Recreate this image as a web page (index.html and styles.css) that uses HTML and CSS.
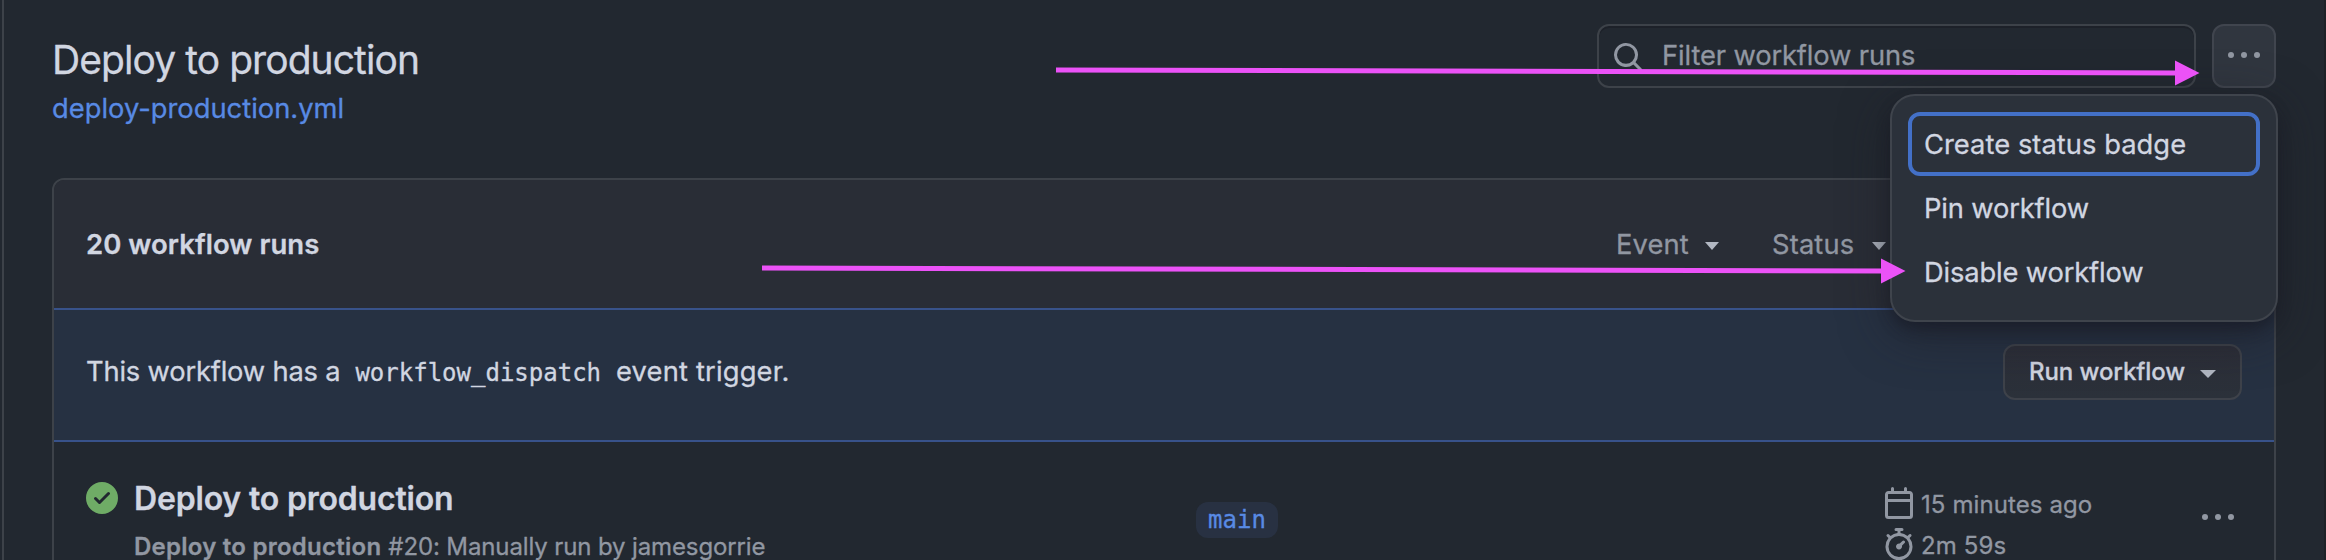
FILE: index.html
```
<!DOCTYPE html>
<html lang="en">
<head>
<meta charset="utf-8">
<title>Workflow runs</title>
<link rel="stylesheet" href="styles.css">
</head>
<body>
<main class="page">
  <header class="page-header">
    <div class="heading">
      <h1 class="title">Deploy to production</h1>
      <a class="file-link">deploy-production.yml</a>
    </div>
    <div class="tools">
      <div class="search">
        <svg class="icon" viewBox="0 0 16 16"><path d="M10.68 11.74a6 6 0 0 1-7.922-8.982 6 6 0 0 1 8.982 7.922l3.04 3.04a.749.749 0 0 1-.326 1.275.749.749 0 0 1-.734-.215ZM11.5 7a4.499 4.499 0 1 0-8.997 0A4.499 4.499 0 0 0 11.5 7Z"/></svg>
        <span class="placeholder">Filter workflow runs</span>
      </div>
      <div class="menu-anchor">
        <button class="more-button"><svg class="dots" viewBox="0 0 32 6"><circle cx="3" cy="3" r="3"/><circle cx="16" cy="3" r="3"/><circle cx="29" cy="3" r="3"/></svg></button>
        <div class="menu">
          <div class="menu-item focused">Create status badge</div>
          <div class="menu-item tight">Pin workflow</div>
          <div class="menu-item tight">Disable workflow</div>
        </div>
      </div>
    </div>
  </header>

  <section class="runs">
    <div class="runs-header">
      <strong class="count">20 workflow runs</strong>
      <div class="filters">
        <div class="filter event">Event<svg class="caret" viewBox="0 0 14 8"><path d="M0 0H14L7 8Z"/></svg></div>
        <div class="filter status">Status<svg class="caret" viewBox="0 0 14 8"><path d="M0 0H14L7 8Z"/></svg></div>
      </div>
    </div>
    <div class="banner">
      <p class="banner-text"><span class="lead">This workflow has a</span><code class="code">workflow_dispatch</code><span class="tail">event trigger.</span></p>
      <button class="run-button">Run workflow<svg class="caret wide" viewBox="0 0 16 8"><path d="M0 0H16L8 8Z"/></svg></button>
    </div>
    <div class="run">
      <div class="run-info">
        <svg class="icon success" viewBox="0 0 16 16"><path d="M8 16A8 8 0 1 1 8 0a8 8 0 0 1 0 16Zm3.78-9.72a.751.751 0 0 0-.018-1.042.751.751 0 0 0-1.042-.018L6.75 9.19 5.28 7.72a.751.751 0 0 0-1.042.018.751.751 0 0 0-.018 1.042l2 2a.75.75 0 0 0 1.06 0Z"/></svg>
        <div>
          <h2 class="run-title">Deploy to production</h2>
          <p class="run-sub"><b class="run-name">Deploy to production</b><span>#20: Manually run by jamesgorrie</span></p>
        </div>
      </div>
      <div><span class="branch">main</span></div>
      <div class="meta">
        <div class="meta-row"><svg class="icon" viewBox="0 0 16 16"><path d="M4.75 0a.75.75 0 0 1 .75.75V2h5V.75a.75.75 0 0 1 1.5 0V2h1.25c.966 0 1.75.784 1.75 1.75v10.5A1.75 1.75 0 0 1 13.25 16H2.75A1.75 1.75 0 0 1 1 14.25V3.75C1 2.784 1.784 2 2.75 2H4V.75A.75.75 0 0 1 4.75 0ZM2.5 7.5v6.75c0 .138.112.25.25.25h10.5a.25.25 0 0 0 .25-.25V7.5Zm10.75-4H2.75a.25.25 0 0 0-.25.25V6h11V3.75a.25.25 0 0 0-.25-.25Z"/></svg><span class="meta-text">15 minutes ago</span></div>
        <div class="meta-row"><svg class="icon" viewBox="0 0 16 16"><path d="M5.75.75A.75.75 0 0 1 6.5 0h3a.75.75 0 0 1 0 1.5h-.75v1l-.001.041a6.724 6.724 0 0 1 3.464 1.435l.007-.006.75-.75a.749.749 0 0 1 1.275.326.749.749 0 0 1-.215.734l-.75.75-.006.007a6.75 6.75 0 1 1-10.548 0L2.72 5.03l-.75-.75a.751.751 0 0 1 .018-1.042.751.751 0 0 1 1.042-.018l.75.75.007.006A6.72 6.72 0 0 1 7.25 2.541V1.5H6.5a.75.75 0 0 1-.75-.75ZM8 14.5a5.25 5.25 0 1 0-.001-10.501A5.25 5.25 0 0 0 8 14.5Zm.389-6.7 1.33-1.33a.75.75 0 1 1 1.061 1.06L9.45 8.861A1.503 1.503 0 0 1 8 10.75a1.499 1.499 0 1 1 .389-2.95Z"/></svg><span class="meta-text">2m 59s</span></div>
      </div>
      <svg class="dots row-dots" viewBox="0 0 32 6"><circle cx="3" cy="3" r="3"/><circle cx="16" cy="3" r="3"/><circle cx="29" cy="3" r="3"/></svg>
    </div>
  </section>
</main>
<svg class="annotations" viewBox="0 0 2326 560">
  <path class="shaft" d="M1056 70L2177 73M762 268L1883 271"/>
  <path class="head" d="M2175 60.5L2199.5 73L2175 85.500ZM1881 258.500L1905.500 271L1881 283.500Z"/>
</svg>
</body>
</html>
```
FILE: styles.css
```
* { box-sizing: border-box; }

body {
  margin: 0;
  width: 2326px;
  height: 560px;
  overflow: hidden;
  background: #222830;
  color: #d1d6e1;
  font: 27.3px/40px "Inter", "Noto Sans", sans-serif;
  -webkit-text-stroke: 0.3px currentColor;
  position: relative;
}

h1, h2, p { margin: 0; }
button { font: inherit; color: inherit; padding: 0; }

.page {
  height: 560px;
  overflow: hidden;
  margin-left: 2px;
  padding: 0 48px;
  border-left: 2px solid #3d4249;
  border-right: 2px solid #1d2127;
}

.page-header {
  display: flex;
  justify-content: space-between;
  height: 178px;
}

.heading { padding-top: 36px; }
.title {
  font-size: 39px;
  line-height: 48px;
  font-weight: 400;
  letter-spacing: -0.93px;
}
.file-link {
  display: block;
  margin-top: 5px;
  letter-spacing: 0.02px;
  color: #588ae4;
}

.tools {
  display: flex;
  gap: 16px;
  padding-top: 24px;
}
.search {
  display: flex;
  align-items: center;
  width: 599px;
  height: 64px;
  padding: 0 0 2px 13px;
  border: 2px solid #3d4249;
  border-radius: 12px;
  box-shadow: inset 0 2px 0 #1d2129;
  color: #9197a2;
}
.placeholder {
  margin: 2px 0 0 18px;
  letter-spacing: -0.12px;
}
.icon {
  flex: none;
  width: 32px;
  height: 32px;
  fill: currentColor;
}
.search .icon { margin-top: 4px; }

.menu-anchor { position: relative; }
.more-button {
  display: block;
  width: 64px;
  height: 64px;
  padding-bottom: 2px;
  border: 2px solid #40454e;
  border-radius: 12px;
  background: #30363f;
}
.dots {
  display: block;
  width: 32px;
  height: 6px;
  margin: 0 auto;
  fill: #9197a2;
}

.menu {
  position: absolute;
  z-index: 2;
  top: 70px;
  right: -2px;
  width: 388px;
  height: 228px;
  padding: 16px;
  border: 2px solid #3f444c;
  border-radius: 25px;
  background: #2b313a;
  box-shadow: 0 8px 14px -2px rgba(22, 24, 34, 0.55), 0 12px 48px rgba(28, 28, 36, 0.6);
}
.menu-item {
  height: 64px;
  padding: 13px 16px;
  border-radius: 12px;
  letter-spacing: 0.05px;
}
.menu-item.focused {
  padding: 9px 12px;
  border: 4px solid #4370c7;
}
.menu-item.tight { letter-spacing: -0.15px; }

.runs {
  height: 420px;
  border: 2px solid #3d4249;
  border-radius: 12px;
}
.runs-header {
  display: flex;
  align-items: center;
  justify-content: space-between;
  height: 128px;
  padding: 0 388px 0 32px;
  border-radius: 10px 10px 0 0;
  background: #292d36;
}
.count {
  font-size: 27.5px;
  font-weight: 600;
  letter-spacing: 0.05px;
}
.filters {
  display: flex;
  gap: 53px;
  padding-top: 2px;
  color: #9197a2;
  letter-spacing: 0.15px;
}
.filter {
  display: flex;
  align-items: center;
  justify-content: space-between;
}
.event { width: 103px; }
.status { width: 114px; }
.caret {
  width: 14px;
  height: 8px;
  margin-top: 2px;
  fill: #b2b8c3;
}
.caret.wide {
  width: 16px;
  margin-top: 4px;
}

.banner {
  display: flex;
  justify-content: space-between;
  height: 134px;
  padding: 34px 32px 0;
  border-top: 2px solid #38528a;
  border-bottom: 2px solid #38528a;
  background: #263142;
}
.banner-text {
  display: flex;
  align-items: baseline;
  margin-top: 8px;
}
.lead { letter-spacing: -0.18px; }
.code {
  margin: 0 15px;
  font-family: "DejaVu Sans Mono", monospace;
  font-size: 24px;
}
.tail { letter-spacing: 0.18px; }
.run-button {
  display: flex;
  align-items: center;
  justify-content: space-between;
  width: 239px;
  height: 56px;
  padding: 0 24px 1px 24px;
  border: 2px solid #3e424a;
  border-radius: 12px;
  background: linear-gradient(#2c2e38, #2b313a);
  font-size: 24px;
  font-weight: 500;
  letter-spacing: -0.08px;
}

.run {
  display: grid;
  grid-template-columns: 1110px 687px 319px 34px;
  padding: 36px 0 0 32px;
}
.run-info {
  display: flex;
  gap: 16px;
}
.success {
  margin-top: 4px;
  color: #6fac66;
}
.run-title {
  margin-top: 1px;
  font-size: 32px;
  line-height: 40px;
  font-weight: 600;
  letter-spacing: -0.18px;
}
.run-sub {
  display: flex;
  gap: 7px;
  margin-top: 13px;
  color: #9197a2;
  font-size: 24px;
  line-height: 30px;
  letter-spacing: -0.12px;
}
.run-name {
  font-weight: 600;
  letter-spacing: 0.25px;
}
.branch {
  display: block;
  width: 82px;
  height: 36px;
  margin-top: 24px;
  border-radius: 12px;
  background: #283142;
  color: #588ae4;
  text-align: center;
  font: 24px/36px "DejaVu Sans Mono", monospace;
}
.meta {
  padding-top: 4px;
  color: #9197a2;
  font-size: 24px;
}
.meta-row {
  display: flex;
  align-items: center;
  gap: 6px;
  height: 41px;
}
.meta-text {
  padding-top: 4px;
  line-height: 32px;
  letter-spacing: 0.1px;
}
.row-dots { margin: 36px 0 0; }

.annotations {
  position: absolute;
  z-index: 3;
  inset: 0;
  width: 2326px;
  height: 560px;
  pointer-events: none;
}
.shaft {
  fill: none;
  stroke: #eb52f7;
  stroke-width: 5;
}
.head { fill: #eb52f7; }
```
